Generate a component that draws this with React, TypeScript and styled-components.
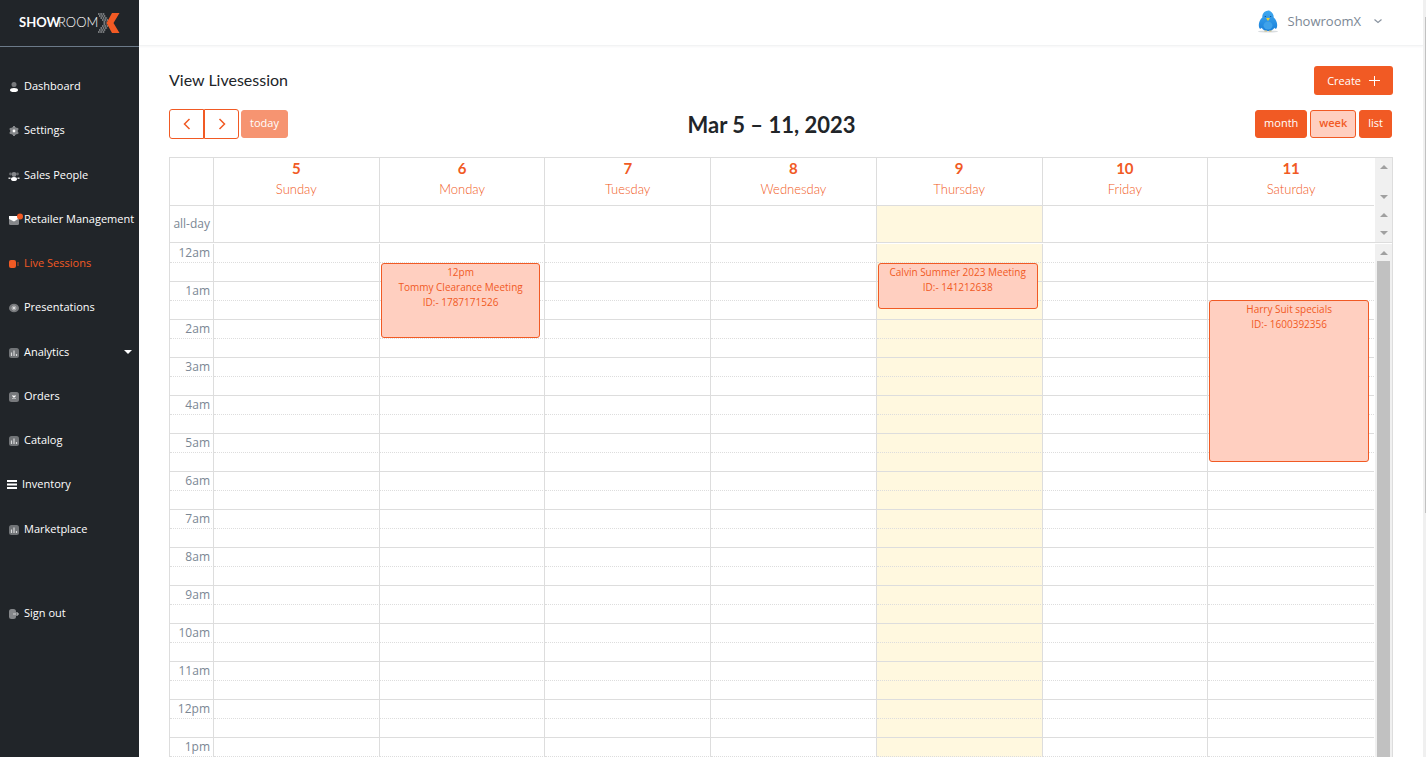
import React from "react";
import styled, { createGlobalStyle, css } from "styled-components";

const ORANGE = "#f15a24";
const PEACH = "#ffcfc0";
const LINE = "#dddddd";
const DARK = "#212529";
const HEADING = `Lato, "Open Sans", sans-serif`;

const Global = createGlobalStyle`
  *, *::before, *::after { box-sizing: border-box; }
  body { margin: 0; overflow: hidden; background: #fff; color: ${DARK}; font: 12px/16px "Open Sans", sans-serif; }
  button { font: inherit; cursor: pointer; }
  a { color: inherit; text-decoration: none; }
`;

const Shell = styled.div`
  display: grid;
  grid-template-columns: 139px minmax(0, 1fr) 3px;
  height: 100vh;
`;

const Sidebar = styled.aside`
  z-index: 1;
  background: ${DARK};
  color: #fff;
  overflow: hidden;
`;
const Brand = styled.a`
  display: flex;
  height: 47px;
  padding: 0 0 0 19px;
  align-items: center;
  border-bottom: 1px solid #6c7a89;
`;
const NavList = styled.ul`
  display: grid;
  grid-template-rows: repeat(11, 1fr);
  height: 487px;
  margin: 17px 0 0;
  padding: 0;
  list-style: none;
`;
const NavLink = styled.a<{ $active?: boolean; $tight?: boolean }>`
  display: flex;
  align-items: center;
  height: 44px;
  gap: 5px;
  padding: 0 8px 0 ${(p) => (p.$tight ? 7 : 9)}px;
  font-size: 11px;
  white-space: nowrap;
  color: ${(p) => (p.$active ? ORANGE : "#fff")};
`;
const IconSlot = styled.span`
  display: flex;
  flex: none;
  width: 10px;
  svg { overflow: visible; margin-top: 2px; }
`;
const Caret = styled.span`
  margin-left: auto;
  margin-right: 2px;
  border: 4px solid transparent;
  border-top-color: #fff;
  border-bottom: 0;
`;
const SignOut = styled.div`
  margin-top: 40px;
`;

const Page = styled.div`
  display: flex;
  flex-direction: column;
  min-height: 0;
`;
const TopBar = styled.header`
  display: flex;
  flex: none;
  height: 46px;
  padding: 0 40px 4px 0;
  align-items: center;
  justify-content: flex-end;
  border-bottom: 1px solid #f2f3f4;
  box-shadow: 0 1px 2px #f6f6f7;
`;
const UserButton = styled.button`
  display: flex;
  align-items: center;
  gap: 8px;
  padding: 0;
  border: 0;
  background: none;
  color: #7b8794;
  font-size: 13px;
`;
const UserName = styled.span`
  margin-right: 4px;
`;

const Content = styled.main`
  display: flex;
  flex: 1;
  flex-direction: column;
  min-height: 0;
  padding: 20px 30px 0;
`;
const TitleRow = styled.div`
  display: flex;
  align-items: center;
  justify-content: space-between;
  height: 29px;
`;
const Title = styled.h1`
  margin: 0;
  padding-bottom: 2px;
  font: 400 16px/20px ${HEADING};
`;
const CreateButton = styled.button`
  display: flex;
  align-items: center;
  gap: 7px;
  height: 29px;
  padding: 0 13px;
  border: 0;
  border-radius: 3px;
  background: ${ORANGE};
  color: #fff;
  font-size: 11px;
`;
const Toolbar = styled.div`
  display: flex;
  align-items: center;
  justify-content: space-between;
  height: 30px;
  margin-top: 14px;
`;
const Group = styled.div<{ $end?: boolean }>`
  display: flex;
  align-items: center;
  gap: ${(p) => (p.$end ? 3 : 2)}px;
  padding-right: ${(p) => (p.$end ? 1 : 0)}px;
`;
const ArrowPair = styled.div`
  display: flex;
`;
const ArrowButton = styled.button`
  display: flex;
  align-items: center;
  justify-content: center;
  width: 35px;
  height: 30px;
  padding: 0;
  border: 1px solid ${ORANGE};
  border-radius: 3px 0 0 3px;
  background: #fff;
  color: ${ORANGE};
  & + & { border-radius: 0 3px 3px 0; }
`;
const ToolButton = styled.button<{ $look?: "faded" | "selected" }>`
  height: 28px;
  padding: 0 8px 2px;
  border: 1px solid ${ORANGE};
  border-radius: 3px;
  background: ${ORANGE};
  color: #fff;
  font-size: 11px;
  ${(p) => p.$look === "faded" && css`background: #f69471; border-color: #f69471;`}
  ${(p) => p.$look === "selected" && css`background: ${PEACH}; color: ${ORANGE}; font-weight: 600;`}
`;
const Range = styled.h2`
  margin: 0;
  padding-top: 2px;
  font: 700 22px/28px ${HEADING};
`;

const Calendar = styled.section`
  display: flex;
  flex: 1;
  flex-direction: column;
  min-height: 0;
  margin-top: 18px;
  border: 1px solid ${LINE};
  border-bottom: 0;
`;
const Pane = styled.div<{ $fill?: boolean }>`
  display: grid;
  grid-template-columns: minmax(0, 1fr) 17px;
  column-gap: 1px;
  flex: ${(p) => (p.$fill ? "1" : "none")};
  min-height: 0;
  overflow: hidden;
  ${(p) => !p.$fill && css`border-bottom: 1px solid ${LINE}; margin-bottom: 1px;`}
`;
const Table = styled.table`
  width: 100%;
  table-layout: fixed;
  border-collapse: separate;
  border-spacing: 0;
  th, td { padding: 0; }
`;
const AxisCol = styled.col`
  width: 44px;
`;
const Blank = styled.td`
  border-right: 1px solid ${LINE};
  border-bottom: 1px solid ${LINE};
`;
const DayHead = styled.th`
  height: 48px;
  border-right: 1px solid ${LINE};
  border-bottom: 1px solid ${LINE};
  vertical-align: top;
  color: ${ORANGE};
  font: 300 13px/21px ${HEADING};
  &:last-child { border-right: 0; }
`;
const DayLink = styled.a`
  display: block;
`;
const DayNumber = styled.strong`
  display: block;
  font-size: 15px;
  font-weight: 700;
`;
const AllDayLabel = styled.th`
  height: 36px;
  border-right: 1px solid ${LINE};
  color: #7b8794;
  text-align: right;
  font-size: 12px;
  font-weight: 400;
`;
const Text = styled.span`
  display: block;
  padding-right: 3px;
  white-space: nowrap;
`;
const AllDayCell = styled.td<{ $today: boolean }>`
  border-right: 1px solid ${LINE};
  background: ${(p) => (p.$today ? "#fff8df" : "none")};
  &:last-child { border-right: 0; }
`;
const SlotRow = styled.tr<{ $half?: boolean }>`
  th, td {
    height: 19px;
    border-right: 1px solid ${LINE};
    border-bottom: 1px ${(p) => (p.$half ? "solid" : "dotted")} ${LINE};
  }
  td:last-child { border-right: 0; }
`;
const HourLabel = styled.th`
  color: #7b8794;
  text-align: right;
  font-size: 12px;
  font-weight: 400;
  line-height: 18px;
`;
const Slot = styled.td<{ $today: boolean }>`
  background: ${(p) => (p.$today ? "#fff8df" : "none")};
`;
const Body = styled.div`
  position: relative;
`;
const EventLayer = styled.div`
  position: absolute;
  inset: 0 0 auto 44px;
  display: grid;
  grid-template-columns: repeat(7, minmax(0, 1fr));
  height: 0;
`;
const EventColumn = styled.div`
  position: relative;
`;
const EventCard = styled.a`
  position: absolute;
  left: 1px;
  right: 5px;
  padding-top: 1px;
  border: 1px solid ${ORANGE};
  border-radius: 3px;
  background: ${PEACH};
  color: ${ORANGE};
  font-size: 10px;
  line-height: 15px;
  text-align: center;
`;
const Line = styled.div`
  white-space: nowrap;
`;

const Rails = styled.div`
  display: flex;
  flex-direction: column;
  background: #f0f0f0;
`;
const Rail = styled.div<{ $h?: number }>`
  display: flex;
  flex-direction: column;
  align-items: center;
  justify-content: space-between;
  flex: ${(p) => (p.$h ? "none" : "1")};
  height: ${(p) => (p.$h ? p.$h + "px" : "auto")};
  padding: 7px 0;
`;
const Tip = styled.span<{ $down?: boolean }>`
  border: 4px solid transparent;
  ${(p) => p.$down
    ? css`border-top-color: #a0a0a0; border-bottom: 0;`
    : css`border-bottom-color: #a0a0a0; border-top: 0;`}
`;
const Thumb = styled.div`
  flex: 1;
  width: 13px;
  margin-top: 6px;
  margin-bottom: -7px;
  background: #c1c1c1;
`;
const PageRail = styled.div`
  padding: 17px 0 0 2px;
  background: #f0f0f0;
`;
const PageThumb = styled.div`
  height: 67%;
  background: #c1c1c1;
`;

const Logo = () => (
  <svg width="102" height="24" viewBox="0 0 102 24" role="img" aria-label="ShowroomX">
    <text x="0" y="16" fill="#fff" fontFamily="Lato, sans-serif" fontSize="13" fontWeight="700">SHOW</text>
    <text x="39" y="16" fill="#fff" fontFamily="Lato, sans-serif" fontSize="13" fontWeight="300">ROOM</text>
    <g stroke="#c9ccce" strokeWidth="1.2" strokeDasharray="1.6 .7" fill="none">
      <path d="M79 3h7M80 5h7M81.500 7h7M83 9h6M84.500 11h3M84.500 13h3M83 15h6M81.500 17h7M80 19h7M79 21h7" />
    </g>
    <path d="M93 2h7.500l-6 10 6 10H93l-5.500-10z" fill={ORANGE} />
  </svg>
);

const Bird = () => (
  <svg width="24" height="24" viewBox="0 0 24 24" aria-hidden="true">
    <defs>
      <linearGradient id="bird" x1="0" y1="0" x2="0" y2="1">
        <stop offset="0" stopColor="#3fa9f0" />
        <stop offset="1" stopColor="#1a80da" />
      </linearGradient>
    </defs>
    <ellipse cx="12" cy="22.500" rx="10" ry="1" fill="#d9dde0" />
    <path d="M11.500 1.800c1.500-.8 2.500-.3 2 .3 3 .9 4.300 3.600 4.200 6.400 3 2.500 4.300 7 3 10.500-.5 1.200-1.800.8-2.400-.2-1.200 2.300-3.400 3.200-6.300 3.200s-5.100-.9-6.300-3.200c-.6 1-1.900 1.400-2.400.2-1.300-3.500 0-8 3-10.500C6.200 5 8 2.300 11.500 1.800z" fill="url(#bird)" />
    <ellipse cx="12" cy="16.500" rx="4.500" ry="4" fill="#3fa2ea" />
    <circle cx="9.300" cy="7.500" r=".6" fill="#0c3f78" />
    <circle cx="14.700" cy="7.500" r=".6" fill="#0c3f78" />
    <path d="M10 9.200q2-.8 4 0L12 12z" fill="#e8cf3a" />
    <path d="M8.500 22h2.500M13 22h2.500" stroke="#d9c070" strokeWidth="1" />
  </svg>
);

const icons: Record<string, React.ReactNode> = {
  user: <><circle cx="5" cy="2.500" r="2.500" fill="#77797c" /><path d="M1 8q0-2 4-2t4 2-4 2-4-2z" fill="#fff" /></>,
  gear: <><circle cx="5" cy="5" r="3.900" fill="#85878a" /><path d="M5 0v10M.7 2.500l8.600 5M.7 7.500l8.600-5" stroke="#85878a" strokeWidth="2" /><circle cx="5" cy="5" r="1.400" fill="#fff" /></>,
  people: <><circle cx="5" cy="3.500" r="2.400" fill="#85878a" /><circle cx="1.500" cy="3" r="1.400" fill="#66696c" /><circle cx="8.500" cy="3" r="1.400" fill="#66696c" /><path d="M2 8q0-2 3-2t3 2-3 2-3-2z" fill="#fff" /><path d="M-.5 6.500h2v1.500h-2zM8.500 6.500h2v1.500h-2z" fill="#ddd" /></>,
  mail: <><rect y="1" width="10" height="9" rx="1.500" fill="#85878a" /><path d="M0 1h9v3L5 6.500 0 4z" fill="#fff" /><circle cx="11" cy="1.500" r="3" fill={ORANGE} /></>,
  video: <><rect y="1" width="7" height="8" rx="2" fill={ORANGE} /><path d="M9 3v4" stroke="#8a3e25" strokeWidth="1.500" /></>,
  eye: <><ellipse cx="5" cy="5" rx="5" ry="4.300" fill="#77797c" /><circle cx="5" cy="5" r="2" fill="none" stroke="#b9babb" /><circle cx="5" cy="5" r="1" fill="#fff" /></>,
  chart: <><rect width="10" height="10" rx="2.500" fill="#717477" /><path d="M2.500 4.500V8M5 2.500V8M7.500 6V8" stroke="#d7d8d9" strokeWidth="1.200" /></>,
  box: <><rect width="10" height="10" rx="2.500" fill="#77797c" /><path d="M3.500 3.500l3 3M6.500 3.500l-3 3" stroke="#fff" strokeWidth="1.200" /></>,
  bars: <path d="M0 1h10M0 4.500h10M0 8h10" stroke="#fff" strokeWidth="2" />,
  exit: <><rect width="7" height="10" rx="2.500" fill="#85878a" /><path d="M4 5h5M7.500 3l2 2-2 2" stroke="#d0d1d2" fill="none" /></>,
};
const Icon = ({ name }: { name: string }) => (
  <IconSlot><svg width="10" height="10" viewBox="0 0 10 10" aria-hidden="true">{icons[name]}</svg></IconSlot>
);

const nav = [
  ["user", "Dashboard"], ["gear", "Settings"], ["people", "Sales People"], ["mail", "Retailer Management"],
  ["video", "Live Sessions"], ["eye", "Presentations"], ["chart", "Analytics"], ["box", "Orders"],
  ["chart", "Catalog"], ["bars", "Inventory"], ["chart", "Marketplace"],
];
const days = ["Sunday", "Monday", "Tuesday", "Wednesday", "Thursday", "Friday", "Saturday"];
const TODAY = 4;
const hours = Array.from({ length: 24 }, (_, h) => `${h % 12 || 12}${h < 12 ? "am" : "pm"}`);
const events = [
  { day: 1, top: 19, height: 75, lines: ["12pm", "Tommy Clearance Meeting", "ID:- 1787171526"] },
  { day: 4, top: 19, height: 46, lines: ["Calvin Summer 2023 Meeting", "ID:- 141212638"] },
  { day: 6, top: 56, height: 162, lines: ["Harry Suit specials", "ID:- 1600392356"] },
];

const Cols = () => <colgroup><AxisCol />{days.map((d) => <col key={d} />)}</colgroup>;

export default function App() {
  return (
    <Shell>
      <Global />
      <Sidebar>
        <Brand href="#"><Logo /></Brand>
        <nav aria-label="Main">
          <NavList>
            {nav.map(([icon, label]) => (
              <li key={label}>
                <NavLink href="#" $active={label === "Live Sessions"} $tight={icon === "bars"}>
                  <Icon name={icon} />{label}{label === "Analytics" && <Caret />}
                </NavLink>
              </li>
            ))}
          </NavList>
          <SignOut><NavLink href="#"><Icon name="exit" />Sign out</NavLink></SignOut>
        </nav>
      </Sidebar>
      <Page>
        <TopBar>
          <UserButton>
            <Bird />
            <UserName>ShowroomX</UserName>
            <svg width="10" height="6" viewBox="0 0 10 6" fill="none" stroke="#8a94a0" strokeWidth="1.200" aria-hidden="true"><path d="M1.500 1.500L5 4.500l3.500-3" /></svg>
          </UserButton>
        </TopBar>
        <Content>
          <TitleRow>
            <Title>View Livesession</Title>
            <CreateButton>
              Create
              <svg width="12" height="12" viewBox="0 0 12 12" stroke="#fff" aria-hidden="true"><path d="M6.500 1v10M1 5.500h11" /></svg>
            </CreateButton>
          </TitleRow>
          <Toolbar>
            <Group>
              <ArrowPair>
                <ArrowButton aria-label="Previous week">
                  <svg width="8" height="12" viewBox="0 0 8 12" fill="none" stroke="currentColor" strokeWidth="1.500" aria-hidden="true"><path d="M6.500 1L1.500 6l5 5" /></svg>
                </ArrowButton>
                <ArrowButton aria-label="Next week">
                  <svg width="8" height="12" viewBox="0 0 8 12" fill="none" stroke="currentColor" strokeWidth="1.500" aria-hidden="true"><path d="M1.500 1l5 5-5 5" /></svg>
                </ArrowButton>
              </ArrowPair>
              <ToolButton $look="faded">today</ToolButton>
            </Group>
            <Range>Mar 5 – 11, 2023</Range>
            <Group $end>
              <ToolButton>month</ToolButton>
              <ToolButton $look="selected">week</ToolButton>
              <ToolButton>list</ToolButton>
            </Group>
          </Toolbar>
          <Calendar>
            <Pane>
              <Table>
                <Cols />
                <thead>
                  <tr>
                    <Blank />
                    {days.map((d, i) => (
                      <DayHead key={d} scope="col"><DayLink href="#"><DayNumber>{i + 5}</DayNumber>{d}</DayLink></DayHead>
                    ))}
                  </tr>
                </thead>
                <tbody>
                  <tr>
                    <AllDayLabel scope="row"><Text>all-day</Text></AllDayLabel>
                    {days.map((d, i) => <AllDayCell key={d} $today={i === TODAY} />)}
                  </tr>
                </tbody>
              </Table>
              <Rails aria-hidden="true">
                <Rail $h={48}><Tip /><Tip $down /></Rail>
                <Rail><Tip /><Tip $down /></Rail>
              </Rails>
            </Pane>
            <Pane $fill>
              <Body>
                <Table>
                  <Cols />
                  <tbody>
                    {hours.map((h) => (
                      <React.Fragment key={h}>
                        <SlotRow>
                          <HourLabel scope="row"><Text>{h}</Text></HourLabel>
                          {days.map((d, i) => <Slot key={d} $today={i === TODAY} />)}
                        </SlotRow>
                        <SlotRow $half>
                          <th />
                          {days.map((d, i) => <Slot key={d} $today={i === TODAY} />)}
                        </SlotRow>
                      </React.Fragment>
                    ))}
                  </tbody>
                </Table>
                <EventLayer>
                  {days.map((d, i) => (
                    <EventColumn key={d}>
                      {events.filter((e) => e.day === i).map((e) => (
                        <EventCard key={e.top} href="#" style={{ top: e.top, height: e.height }}>
                          {e.lines.map((l) => <Line key={l}>{l}</Line>)}
                        </EventCard>
                      ))}
                    </EventColumn>
                  ))}
                </EventLayer>
              </Body>
              <Rails aria-hidden="true"><Rail><Tip /><Thumb /></Rail></Rails>
            </Pane>
          </Calendar>
        </Content>
      </Page>
      <PageRail aria-hidden="true"><PageThumb /></PageRail>
    </Shell>
  );
}
